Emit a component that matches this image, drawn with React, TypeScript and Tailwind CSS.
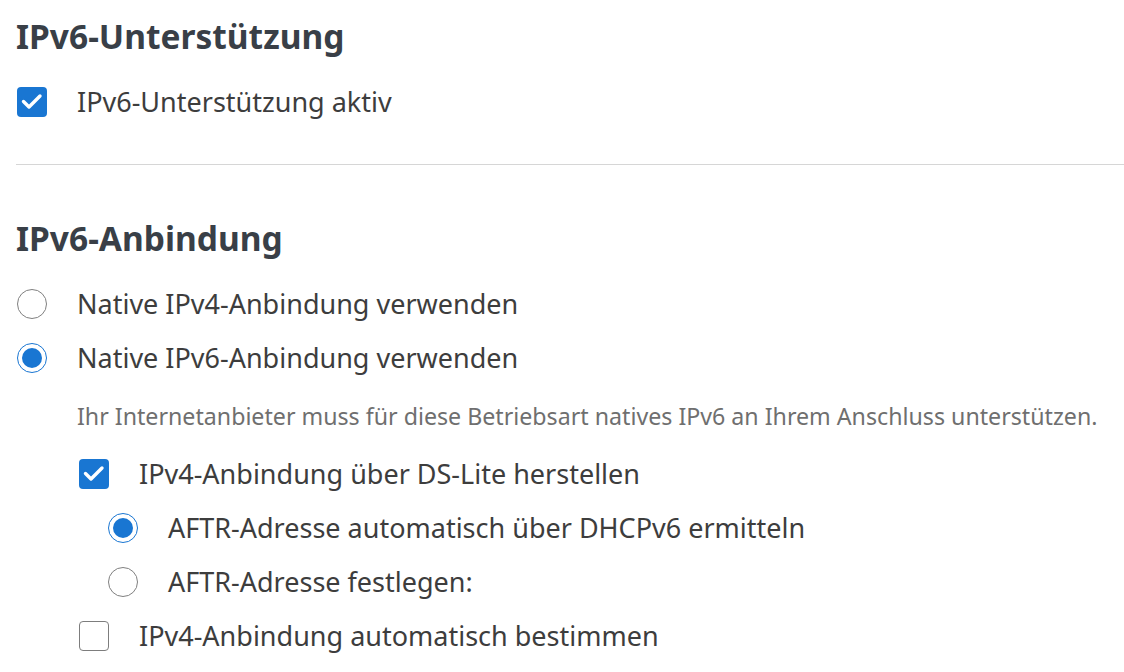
import React from "react";

const font = { fontFamily: "'Noto Sans', 'Open Sans', sans-serif" };

function Checkbox({ checked }: { checked: boolean }) {
  return checked ? (
    <span className="flex h-[30px] w-[30px] shrink-0 items-center justify-center rounded-[4px] bg-[#1976d2]">
      <svg width="30" height="30" viewBox="0 0 30 30" fill="none">
        <path d="M6.5 14.5 L12 20 L23 9" stroke="white" strokeWidth="3.4" strokeLinecap="round" strokeLinejoin="round" />
      </svg>
    </span>
  ) : (
    <span className="h-[30px] w-[30px] shrink-0 rounded-[4px] border-[1.5px] border-[#7d7d7d] bg-white" />
  );
}

function Radio({ checked }: { checked: boolean }) {
  return checked ? (
    <span className="flex h-[30px] w-[30px] shrink-0 items-center justify-center rounded-full border-[1.5px] border-[#1976d2] bg-white">
      <span className="h-[20px] w-[20px] rounded-full bg-[#1976d2]" />
    </span>
  ) : (
    <span className="h-[30px] w-[30px] shrink-0 rounded-full border-[1.5px] border-[#808080] bg-white" />
  );
}

function Row({ indent, control, label }: { indent: string; control: React.ReactNode; label: string }) {
  return (
    <div className={`flex h-[54px] items-center gap-[30px] ${indent}`}>
      {control}
      <span className="-mt-[2px] text-[27px] leading-none text-[#3d3d3d]">{label}</span>
    </div>
  );
}

export default function App() {
  return (
    <div className="min-h-[672px] w-[1124px] overflow-hidden bg-white" style={font}>
      <div className="pt-[12px]">
        <h2 className="flex h-[48px] items-center pl-4 text-[33.5px] font-bold text-[#393f47]">IPv6-Unterstützung</h2>
        <div className="mt-[15px]">
          <Row indent="pl-[17px]" control={<Checkbox checked />} label="IPv6-Unterstützung aktiv" />
        </div>
      </div>
      <div className="ml-4 mt-[35px] h-px bg-[#d6d6d6]" />
      <div className="mt-[49px]">
        <h2 className="flex h-[48px] items-center pl-4 text-[33.5px] font-bold text-[#393f47]">IPv6-Anbindung</h2>
        <div className="mt-[15px]">
          <Row indent="pl-[17px]" control={<Radio checked={false} />} label="Native IPv4-Anbindung verwenden" />
          <Row indent="pl-[17px]" control={<Radio checked />} label="Native IPv6-Anbindung verwenden" />
          <div className="flex h-[62px] items-center pl-[77px] text-[23.2px] text-[#6f6f6f]">
            Ihr Internetanbieter muss für diese Betriebsart natives IPv6 an Ihrem Anschluss unterstützen.
          </div>
          <Row indent="pl-[79px]" control={<Checkbox checked />} label="IPv4-Anbindung über DS-Lite herstellen" />
          <Row indent="pl-[108px]" control={<Radio checked />} label="AFTR-Adresse automatisch über DHCPv6 ermitteln" />
          <Row indent="pl-[108px]" control={<Radio checked={false} />} label="AFTR-Adresse festlegen:" />
          <Row indent="pl-[79px]" control={<Checkbox checked={false} />} label="IPv4-Anbindung automatisch bestimmen" />
        </div>
      </div>
    </div>
  );
}
